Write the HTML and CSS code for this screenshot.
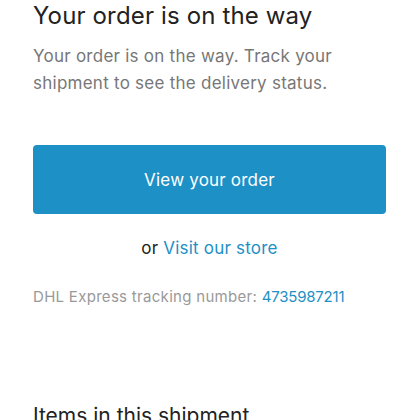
FILE: index.html
```html
<!DOCTYPE html>
<html lang="en">
<head>
    <meta charset="UTF-8">
    <meta name="viewport" content="width=device-width, initial-scale=1.0">
    <title>Your order is on the way</title>
    <link rel="stylesheet" href="styles.css">
</head>
<body>
    <div class="container">
        <h1>Your order is on the way</h1>
        <p class="intro">Your order is on the way. Track your shipment to see the delivery status.</p>

        <!-- Main call to action -->
        <a class="button" href="#">View your order</a>
        <p class="secondary">or <a href="#">Visit our store</a></p>

        <p class="tracking">DHL Express tracking number: <a class="number" href="#">4735987211</a></p>

        <h2>Items in this shipment</h2>
    </div>
</body>
</html>
```

FILE: styles.css
```css
body {
    font-family: 'Inter', 'Roboto', sans-serif;
    background-color: #fff;
    margin: 0;
    padding: 0;
}

.container {
    padding: 1px 34px 0 33px;
}

h1 {
    font-size: 24px;
    line-height: 29px;
    font-weight: 400;
    color: #222;
    letter-spacing: 0.15px;
    margin: 0;
}

.intro {
    font-size: 17px;
    line-height: 27px;
    color: #777;
    letter-spacing: 0.25px;
    margin: 13px 0 0;
}

.button {
    display: flex;
    justify-content: center;
    align-items: center;
    height: 69px;
    margin-top: 48px;
    background-color: #1d90c6;
    color: #fff;
    border-radius: 4px;
    font-size: 17px;
    letter-spacing: 0.2px;
    text-decoration: none;
}

.secondary {
    text-align: center;
    font-size: 17px;
    line-height: 27px;
    color: #222;
    letter-spacing: 0.2px;
    margin: 21px 0 0;
}

a {
    color: #1d90c6;
    text-decoration: none;
}

.tracking {
    font-size: 15px;
    line-height: 22px;
    color: #999;
    letter-spacing: 0.3px;
    margin: 24px 0 0;
}

.tracking .number {
    letter-spacing: -0.2px;
}

h2 {
    font-size: 21px;
    line-height: 25px;
    font-weight: 400;
    color: #222;
    margin: 95px 0 0;
}
```
